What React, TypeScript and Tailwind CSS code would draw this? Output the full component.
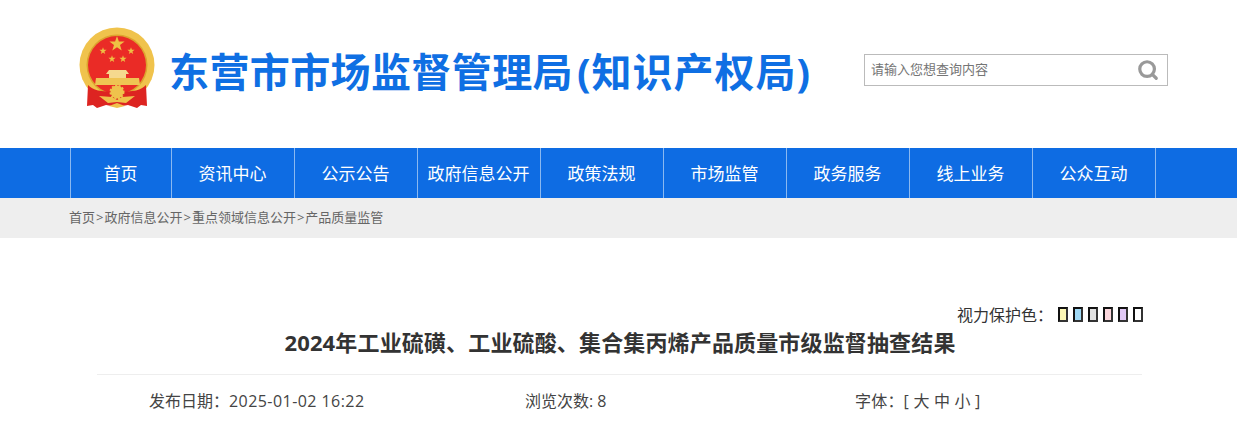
import { Search } from "lucide-react";

const navItems = ["首页", "资讯中心", "公示公告", "政府信息公开", "政策法规", "市场监管", "政务服务", "线上业务", "公众互动"];
const swatches = ["bg-[#fdf8b5]", "bg-[#a0d9f5]", "bg-[#e0e0e0]", "bg-[#fbd6dc]", "bg-[#e0c8f5]", "bg-white"];
const crumbs = ["首页", "政府信息公开", "重点领域信息公开", "产品质量监管"];
const font = "font-['Open_Sans','Noto_Sans_CJK_SC',sans-serif]";

// five point star as polygon points
function star(cx: number, cy: number, r: number) {
    const pts: string[] = [];
    for (let i = 0; i < 10; i++) {
        const rad = i % 2 === 0 ? r : r * 0.4;
        const a = (Math.PI / 5) * i - Math.PI / 2;
        pts.push(`${(cx + rad * Math.cos(a)).toFixed(1)},${(cy + rad * Math.sin(a)).toFixed(1)}`);
    }
    return pts.join(" ");
}

function Emblem() {
    return (
        <svg width="78" height="84" viewBox="0 0 78 84" className="shrink-0 mt-[-12px]">
            <circle cx="39" cy="39" r="37.5" fill="#f0c34c" />
            <circle cx="39" cy="39" r="30.5" fill="#dca32e" />
            <circle cx="39" cy="39" r="29" fill="#ea2b26" />
            <polygon points={star(39, 18, 8)} fill="#eec044" />
            <polygon points={star(25, 25, 3.8)} fill="#eec044" />
            <polygon points={star(53, 25, 3.8)} fill="#eec044" />
            <polygon points={star(34, 33, 3.8)} fill="#eec044" />
            <polygon points={star(45, 33, 3.8)} fill="#eec044" />
            {/* gate */}
            <path d="M31 44h17l3 4h-3v4h-17v-4h-3z" fill="#f5d98e" />
            <path d="M18 52h43l1 7H17z" fill="#efc453" />
            {/* drapes */}
            <path d="M10 59c5 5 12 7 29 7s24-2 29-7l1 21-6-1-4 3-9-3-11 2-11-2-9 3-4-3-6 1z" fill="#dd2421" />
            {/* gear and ribbon */}
            <circle cx="39" cy="66" r="6.5" fill="#efc24c" stroke="#efc24c" strokeWidth="2" strokeDasharray="2 1.5" />
            <path d="M21 70l13 1 5 3 5-3 13-1-9 7-9-1-9 1z" fill="#efc24c" />
            <path d="M31 80l8-3 8 3-8 2z" fill="#efc24c" />
        </svg>
    );
}

export default function App() {
    return (
        <div className={`${font} w-[1237px] h-[425px] overflow-hidden bg-white`}>
            {/* Header */}
            <div className="h-[148px] flex items-center pl-[78px]">
                <Emblem />
                <h1 className="ml-[13px] w-[650px] whitespace-nowrap text-[40px] tracking-[0.4px] leading-[50px] font-bold text-[#0f6fe3] mt-[-5px]">
                    东营市市场监督管理局<span className="ml-[4px] tracking-[1px]">(知识产权局)</span>
                </h1>
                <div className="ml-[45px] mt-[-8px] w-[304px] h-[32px] border border-[#bbbbbb] flex items-center justify-between pl-[6px] pr-[8px]">
                    <span className="text-[13px] text-[#757575]">请输入您想查询内容</span>
                    <Search size={22} strokeWidth={3.5} className="text-[#999999]" />
                </div>
            </div>

            {/* Nav */}
            <div className="h-[50px] bg-[#0e6ce3] pl-[70px]">
                <ul className="flex h-full border-l border-[#8ab8f0] w-fit">
                    {navItems.map((item, i) => (
                        <li
                            key={item}
                            className={`${i === 0 ? "w-[101px]" : "w-[123px]"} h-full flex items-center justify-center border-r border-[#8ab8f0] text-white text-[17px] whitespace-nowrap pr-[1px] pt-[1px]`}
                        >
                            {item}
                        </li>
                    ))}
                </ul>
            </div>

            {/* Breadcrumb */}
            <div className="h-[40px] bg-[#eeeeee] flex items-center pl-[69px] text-[13px] text-[#666666]">
                {crumbs.map((c, i) => (
                    <span key={c}>
                        {i > 0 && <span className="mx-[1px]">&gt;</span>}
                        {c}
                    </span>
                ))}
            </div>

            {/* Article head */}
            <div className="ml-[97px] w-[1046px]">
                <div className="mt-[67px] h-[20px] flex items-center justify-end text-[16px] text-[#333333]">
                    <span>视力保护色：</span>
                    <div className="flex gap-[5px] ml-[5px] mt-[-1px]">
                        {swatches.map((s) => (
                            <span key={s} className={`${s} block w-[10px] h-[15px] border-2 border-[#111111] border-r-[#333333] border-b-[#333333]`}></span>
                        ))}
                    </div>
                </div>
                <h2 className="mt-0 text-center text-[22px] tracking-[0.15px] leading-[34px] font-bold text-[#333333] whitespace-nowrap">
                    2024年工业硫磺、工业硫酸、集合集丙烯产品质量市级监督抽查结果
                </h2>
                <div className="mt-[15px] w-[1045px] border-t border-[#eeeeee] pt-[14px] flex text-[16px] leading-[24px] text-[#444444]">
                    <span className="ml-[52px] w-[376px]">发布日期：<span className="tracking-[0.44px]">2025-01-02 16:22</span></span>
                    <span className="w-[330px]">浏览次数: 8</span>
                    <span className="tracking-[0.2px]">字体：[ 大 中 小 ]</span>
                </div>
            </div>
        </div>
    );
}
